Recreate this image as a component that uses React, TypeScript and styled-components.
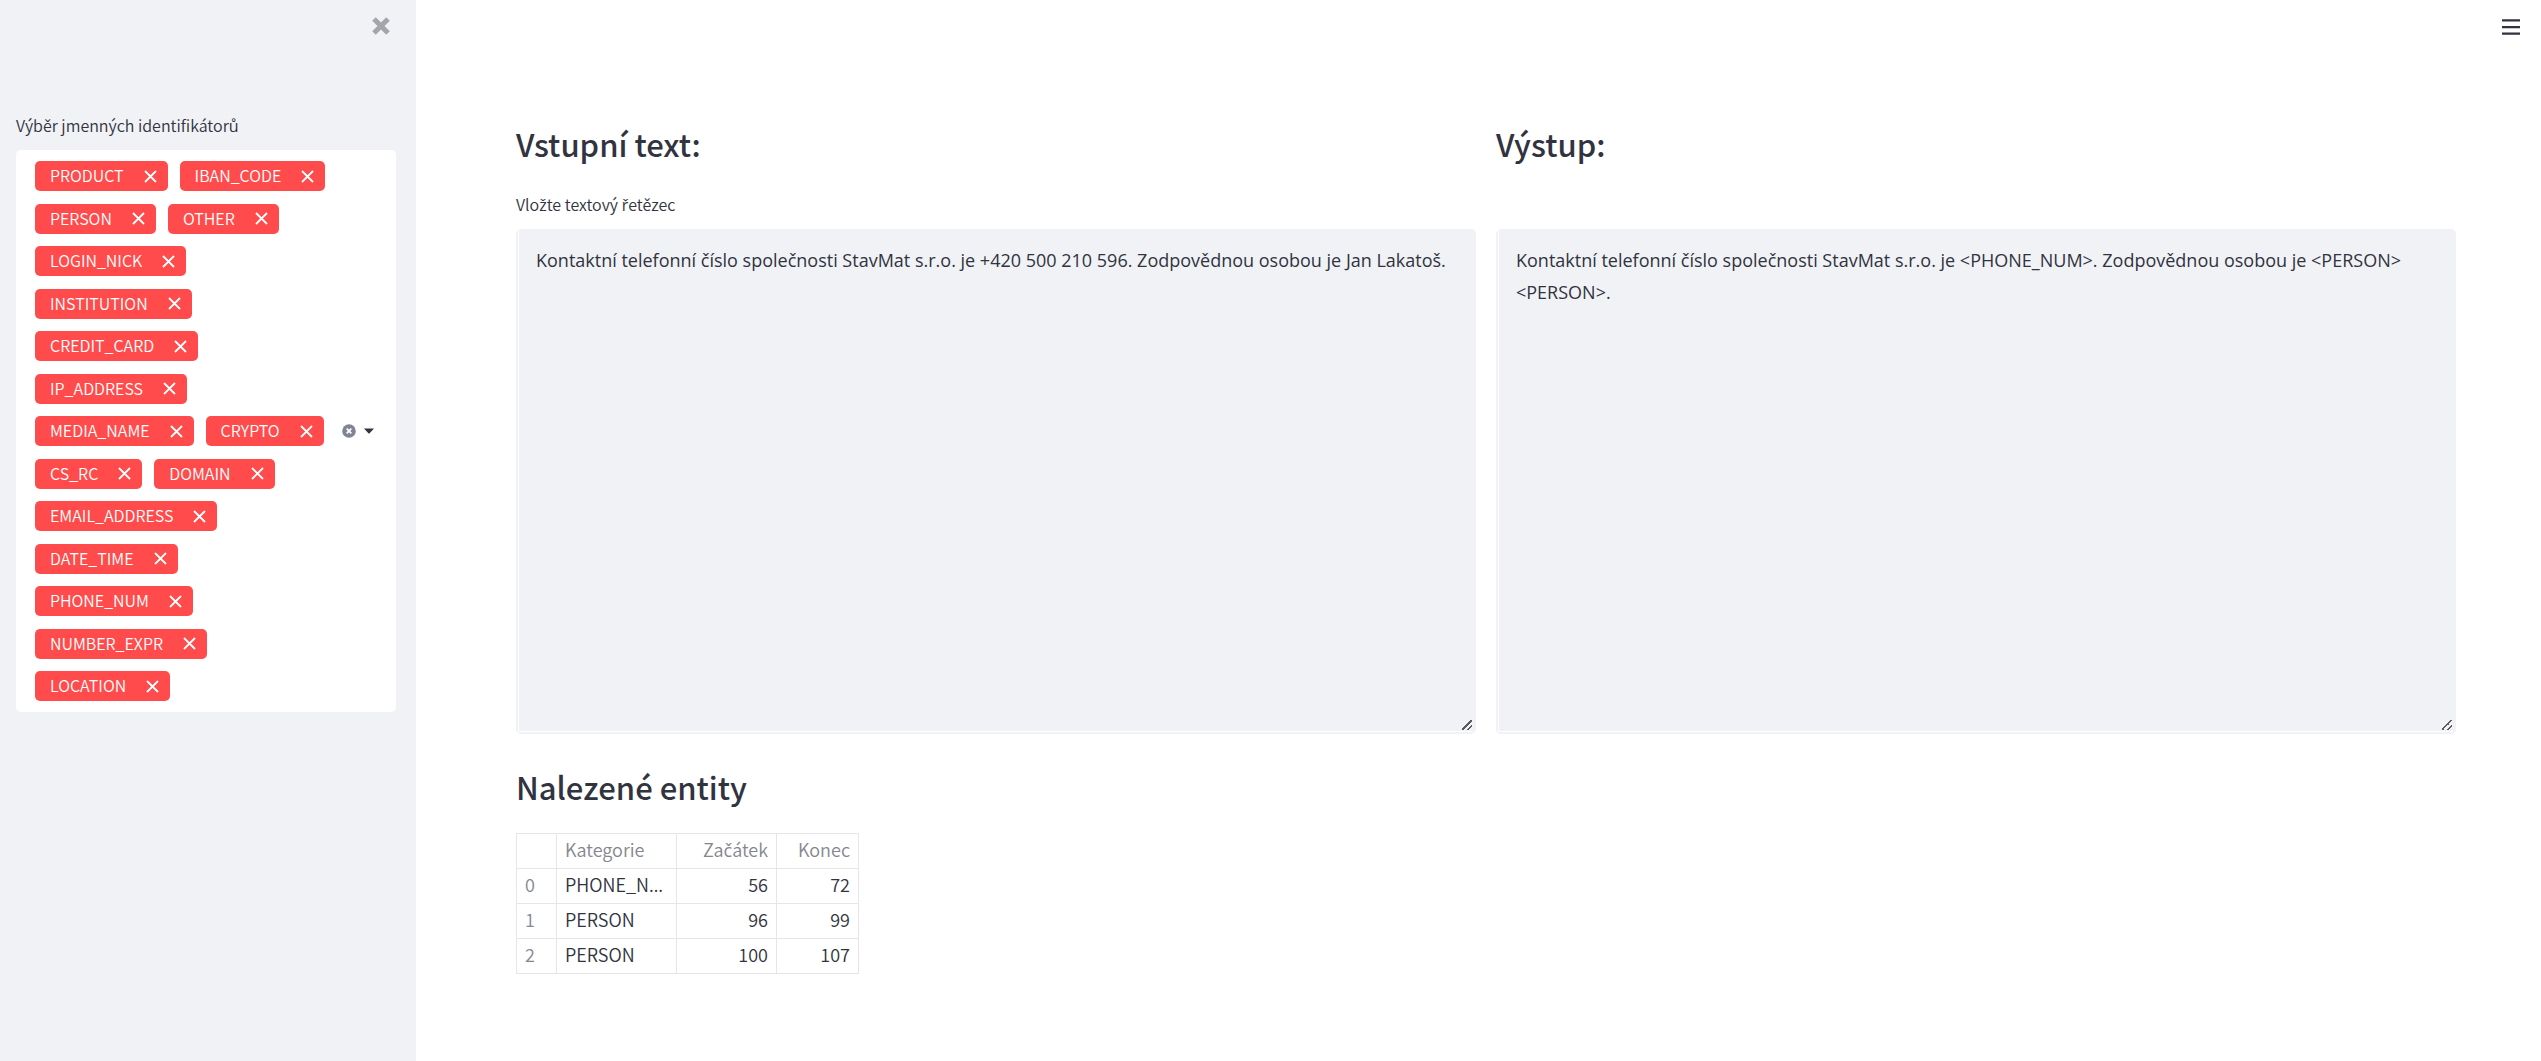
import React, { Fragment, useState } from "react";
import styled, { createGlobalStyle } from "styled-components";

const ink = "#31333f";
const panel = "#f0f2f6";
const line = "#e6e6e8";
const mainFont = `"Noto Sans CJK KR", "Open Sans", sans-serif`;

const GlobalStyle = createGlobalStyle`
  *, *::before, *::after { box-sizing: border-box; }
  body { margin: 0; background: #fff; }
  body, button {
    color: ${ink};
    font-family: ${mainFont};
    font-weight: 350;
  }
`;

const Page = styled.div`
  display: flex;
  min-height: 100vh;
`;

const IconButton = styled.button`
  display: flex;
  flex: none;
  padding: 0;
  border: 0;
  background: none;
  color: inherit;
  cursor: pointer;
`;

const Sidebar = styled.aside`
  flex: none;
  width: 416px;
  padding: 17px 20px 40px 16px;
  background: ${panel};
`;

const SidebarTop = styled.div`
  display: flex;
  justify-content: flex-end;
  height: 96px;
  padding-right: 6px;
  color: #a3a5ab;
`;

const SidebarLabel = styled.div`
  margin-bottom: 12px;
  font-size: 16px;
  line-height: 25px;
`;

const MultiSelect = styled.div`
  display: flex;
  align-items: center;
  padding: 11px 22px 11px 19px;
  border-radius: 5px;
  background: #fff;
`;

const Tags = styled.ul`
  display: flex;
  flex: 1;
  flex-wrap: wrap;
  align-content: space-between;
  column-gap: 12px;
  min-height: 540px;
  margin: 0;
  padding: 0;
  list-style: none;
`;

const Tag = styled.li`
  display: flex;
  align-items: center;
  gap: 20px;
  height: 30px;
  padding: 0 11px 0 15px;
  border-radius: 5px;
  background: #ff4b4b;
  color: #fff;
`;

const TagName = styled.span`
  padding-bottom: 2px;
  font-size: 16px;
  line-height: 28px;
`;

const SelectTools = styled.div`
  display: flex;
  align-items: center;
  gap: 8px;
  margin-left: 8px;
`;

const Main = styled.main`
  display: flex;
  flex: 1;
  flex-direction: column;
  min-width: 0;
`;

const TopBar = styled.header`
  display: flex;
  justify-content: flex-end;
  height: 118px;
  padding: 19px 21px 0 0;
`;

const Content = styled.div`
  padding: 0 85px 80px 100px;
`;

const Columns = styled.div`
  display: grid;
  grid-template-columns: 1fr 1fr;
  gap: 20px;
  align-items: end;
`;

const Column = styled.section`
  min-width: 0;
`;

const Heading = styled.h2`
  margin: 0;
  font-size: 31px;
  font-weight: 500;
  line-height: 52px;
`;

const FieldLabel = styled.label`
  display: block;
  height: 59px;
  padding-top: 22px;
  font-size: 16px;
  line-height: 25px;
`;

const Field = styled.div`
  display: flex;
  padding: 0 3px 2px 2px;
  border-radius: 5px;
  background: ${panel};
`;

const TextArea = styled.textarea`
  display: block;
  width: 100%;
  height: 503px;
  padding: 15px 17px;
  border: solid #fff;
  border-width: 0 0 1px 1px;
  outline: 0;
  background: ${panel};
  color: ${ink};
  font-family: "Open Sans", sans-serif;
  font-size: 18px;
  font-weight: 400;
  line-height: 32px;
  resize: vertical;

  &::-webkit-resizer {
    background: linear-gradient(
        135deg,
        transparent 44%,
        #5a5a60 44% 55%,
        transparent 55% 73%,
        #5a5a60 73% 84%,
        transparent 84%
      )
      4px 4px / 10px 10px no-repeat;
  }
`;

const Results = styled.section`
  padding-top: 27px;
`;

const Table = styled.table`
  width: 343px;
  margin-top: 20px;
  border-collapse: collapse;
  table-layout: fixed;
  font-size: 18px;
  line-height: 32px;
`;

const Col = styled.col<{ $w: number }>`
  width: ${(p) => p.$w}px;
`;

/* The ellipsis comes from the cell's own face, where it sits on the baseline. */
const Cell = styled.td<{ $right?: boolean; $muted?: boolean }>`
  height: 35px;
  padding: 0 8px 2px;
  overflow: hidden;
  border: 1px solid ${line};
  color: ${(p) => (p.$muted ? "#85868e" : ink)};
  font-family: "Open Sans", sans-serif;
  font-weight: 400;
  text-align: ${(p) => (p.$right ? "right" : "left")};
  text-overflow: ellipsis;
  white-space: nowrap;
`;

const CellText = styled.span`
  font-family: ${mainFont};
  font-weight: 350;
  line-height: 1;
`;

const Accented = styled.span`
  font-family: "Open Sans", sans-serif;
  font-weight: 400;
  line-height: 1;
`;

/* The main face has no glyphs for these Czech letters. */
const Czech = ({ children }: { children: string }) => (
  <>
    {children.split(/([čřšžůČŘŠŽŮ])/).map((part, i) =>
      i % 2 ? <Accented key={i}>{part}</Accented> : <Fragment key={i}>{part}</Fragment>
    )}
  </>
);

const CloseIcon = () => (
  <svg width="18" height="18" viewBox="0 0 18 18" fill="none" stroke="currentColor" strokeWidth="5">
    <path d="M2 2l14 14M16 2L2 16" />
  </svg>
);

const RemoveIcon = () => (
  <svg width="13" height="13" viewBox="0 0 13 13" fill="none" stroke="currentColor" strokeWidth="1.800">
    <path d="M1 1l11 11M12 1L1 12" />
  </svg>
);

const ClearIcon = () => (
  <svg width="14" height="14" viewBox="0 0 14 14">
    <circle cx="7" cy="7" r="6.800" fill="#808495" />
    <path d="M4.700 4.700l4.600 4.600M9.300 4.700L4.700 9.300" stroke="#fff" strokeWidth="1.800" />
  </svg>
);

const CaretIcon = () => (
  <svg width="10" height="6" viewBox="0 0 10 6">
    <path d="M0 .5h10L5.600 5.200q-.6.5-1.200 0z" fill={ink} />
  </svg>
);

const MenuIcon = () => (
  <svg width="18" height="16" viewBox="0 0 18 16" fill={ink}>
    <path d="M0 .3h18v2.300H0zM0 6.900h18v2.300H0zM0 13.500h18v2.300H0z" />
  </svg>
);

const entityTypes = [
  "PRODUCT", "IBAN_CODE", "PERSON", "OTHER", "LOGIN_NICK", "INSTITUTION",
  "CREDIT_CARD", "IP_ADDRESS", "MEDIA_NAME", "CRYPTO", "CS_RC", "DOMAIN",
  "EMAIL_ADDRESS", "DATE_TIME", "PHONE_NUM", "NUMBER_EXPR", "LOCATION",
];

const entities = [
  { kind: "PHONE_NUM", start: 56, end: 72 },
  { kind: "PERSON", start: 96, end: 99 },
  { kind: "PERSON", start: 100, end: 107 },
];

export default function App() {
  const [selected, setSelected] = useState(entityTypes);
  const [text, setText] = useState(
    "Kontaktní telefonní číslo společnosti StavMat s.r.o. je +420 500 210 596. Zodpovědnou osobou je Jan Lakatoš."
  );

  return (
    <Page>
      <GlobalStyle />
      <Sidebar>
        <SidebarTop>
          <IconButton type="button" aria-label="Zavřít">
            <CloseIcon />
          </IconButton>
        </SidebarTop>
        <SidebarLabel id="types-label">
          <Czech>Výběr jmenných identifikátorů</Czech>
        </SidebarLabel>
        <MultiSelect role="group" aria-labelledby="types-label">
          <Tags>
            {selected.map((name) => (
              <Tag key={name}>
                <TagName>{name}</TagName>
                <IconButton
                  type="button"
                  aria-label={`Odebrat ${name}`}
                  onClick={() => setSelected(selected.filter((n) => n !== name))}
                >
                  <RemoveIcon />
                </IconButton>
              </Tag>
            ))}
          </Tags>
          <SelectTools>
            <IconButton type="button" aria-label="Vymazat vše" onClick={() => setSelected([])}>
              <ClearIcon />
            </IconButton>
            <IconButton type="button" aria-label="Otevřít nabídku">
              <CaretIcon />
            </IconButton>
          </SelectTools>
        </MultiSelect>
      </Sidebar>
      <Main>
        <TopBar>
          <IconButton type="button" aria-label="Nabídka">
            <MenuIcon />
          </IconButton>
        </TopBar>
        <Content>
          <Columns>
            <Column>
              <Heading>Vstupní text:</Heading>
              <FieldLabel htmlFor="input-text">
                <Czech>Vložte textový řetězec</Czech>
              </FieldLabel>
              <Field>
                <TextArea
                  id="input-text"
                  spellCheck={false}
                  value={text}
                  onChange={(e) => setText(e.target.value)}
                />
              </Field>
            </Column>
            <Column>
              <Heading id="output-title">Výstup:</Heading>
              <FieldLabel as="div" />
              <Field>
                <TextArea
                  aria-labelledby="output-title"
                  spellCheck={false}
                  readOnly
                  value="Kontaktní telefonní číslo společnosti StavMat s.r.o. je <PHONE_NUM>. Zodpovědnou osobou je <PERSON> <PERSON>."
                />
              </Field>
            </Column>
          </Columns>
          <Results>
            <Heading>Nalezené entity</Heading>
            <Table>
              <colgroup>
                <Col $w={40} />
                <Col $w={120} />
                <Col $w={100} />
                <Col $w={82} />
              </colgroup>
              <thead>
                <tr>
                  <Cell />
                  <Cell as="th" scope="col" $muted>
                    <CellText>Kategorie</CellText>
                  </Cell>
                  <Cell as="th" scope="col" $muted $right>
                    <CellText><Czech>Začátek</Czech></CellText>
                  </Cell>
                  <Cell as="th" scope="col" $muted $right>
                    <CellText>Konec</CellText>
                  </Cell>
                </tr>
              </thead>
              <tbody>
                {entities.map((e, i) => (
                  <tr key={i}>
                    <Cell as="th" scope="row" $muted>
                      <CellText>{i}</CellText>
                    </Cell>
                    <Cell>
                      <CellText>{e.kind}</CellText>
                    </Cell>
                    <Cell $right>
                      <CellText>{e.start}</CellText>
                    </Cell>
                    <Cell $right>
                      <CellText>{e.end}</CellText>
                    </Cell>
                  </tr>
                ))}
              </tbody>
            </Table>
          </Results>
        </Content>
      </Main>
    </Page>
  );
}
